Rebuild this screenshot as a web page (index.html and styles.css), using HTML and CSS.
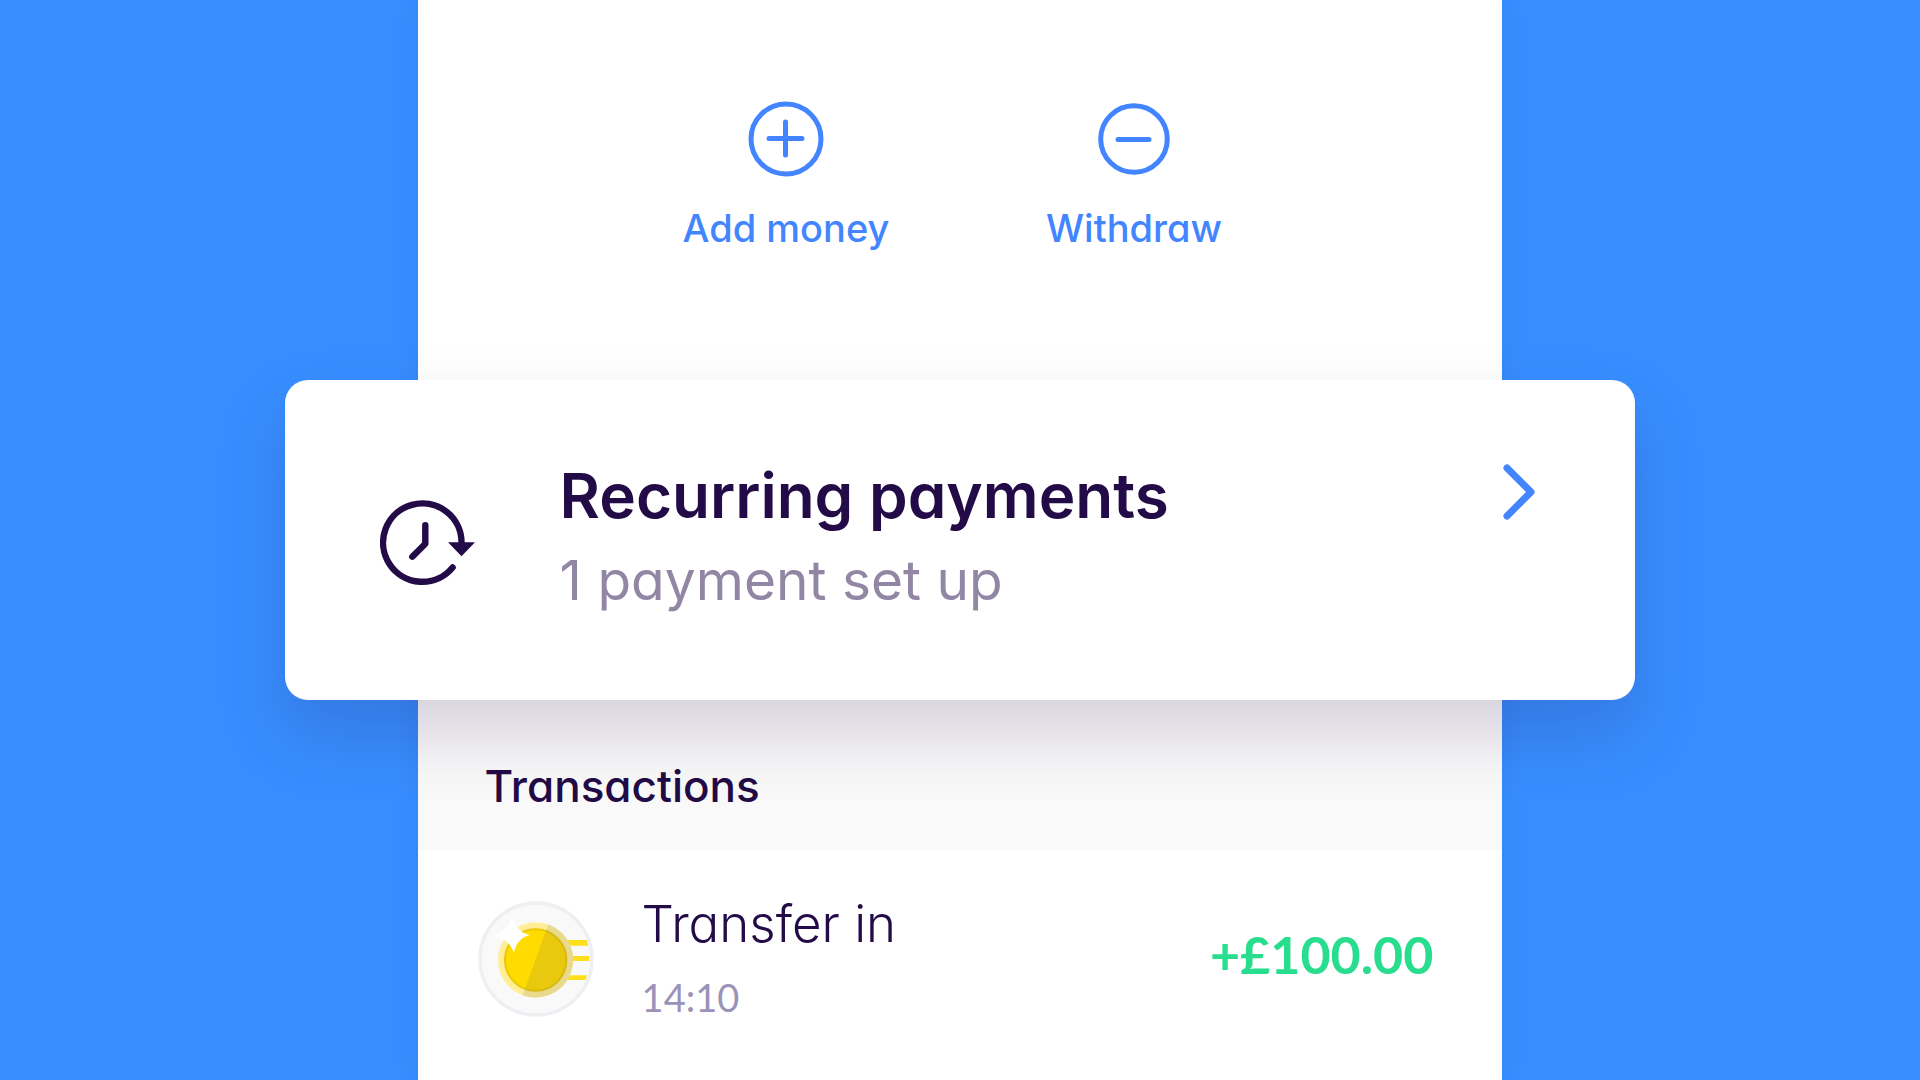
FILE: index.html
```html
<!DOCTYPE html>
<html lang="en">

<head>
    <meta charset="utf-8">
    <title>Recurring payments</title>
    <link rel="stylesheet" href="styles.css">
</head>

<body>
    <main class="panel">
        <section class="actions">
            <button class="action" type="button">
                <svg class="action-icon" viewBox="0 0 76 76" aria-hidden="true">
                    <circle cx="38" cy="38" r="35" />
                    <path d="M21 37.5h33M37.5 21v33" />
                </svg>
                Add money
            </button>
            <button class="action" type="button">
                <svg class="action-icon" viewBox="0 0 76 76" aria-hidden="true">
                    <circle cx="38" cy="38" r="33.3" />
                    <path d="M22 38.5h31" />
                </svg>
                Withdraw
            </button>
        </section>

        <a class="card" href="#recurring">
            <svg class="clock" viewBox="20 29 96 88" aria-hidden="true">
                <path d="M101.5 74A39.2 39.2 0 1 0 92.6 97.5M65.3 55.3v18.4L52.3 86.7" />
                <path class="clock-arrow" d="M88 72.3h27l-13.5 14z" />
            </svg>
            <div class="card-text">
                <h1 class="card-title">Recurring payments</h1>
                <p class="card-sub">1 payment set up</p>
            </div>
            <svg class="chevron" viewBox="0 0 32 56" aria-hidden="true">
                <path d="M4 4l24 24L4 52" />
            </svg>
        </a>

        <section class="transactions">
            <h2 class="section-title">Transactions</h2>
            <div class="row">
                <svg class="coin" viewBox="0 0 348 348" aria-hidden="true">
                    <circle cx="174" cy="174" r="168" fill="#f9f9f9" stroke="#eeeef3" stroke-width="10" />
                    <path d="M255 117h72l4 17h-76zM255 165h79v15h-79zM255 223h72l-4 14h-68z" fill="#ffdf1b" />
                    <circle cx="173" cy="177" r="113" fill="#ffee96" />
                    <circle cx="173" cy="177" r="92" fill="#ffdb00" stroke="#ebc906" stroke-width="6" />
                    <!-- shaded half of the coin -->
                    <path d="M211 70A113 113 0 0 1 134 283z" fill="#625a5d" fill-opacity=".14" />
                    <path d="M103 44Q113 92 156 102Q116 112 108 155Q94 113 46 104Q93 92 103 44z" fill="#fff" />
                </svg>
                <div class="row-text">
                    <h3 class="row-title">Transfer in</h3>
                    <time class="row-time">14:10</time>
                </div>
                <span class="amount">+£100.00</span>
            </div>
        </section>
    </main>
</body>

</html>
```
FILE: styles.css
```css
* {
    box-sizing: border-box;
}

body {
    margin: 0;
    min-height: 100vh;
    display: flex;
    justify-content: center;
    overflow: hidden;
    background: #388eff;
    color: #220b47;
    font-family: Inter, "Open Sans", sans-serif;
    font-feature-settings: "cv11";
}

h1,
h2,
h3,
p {
    margin: 0;
}

.panel {
    width: 56.5%;
    background: #fff;
    box-shadow: 0 0 24px rgba(34, 11, 71, 0.08);
}

.actions {
    display: grid;
    grid-template-columns: 348px 348px;
    justify-content: center;
    align-items: start;
    height: 380px;
    padding-top: 101px;
}

.action {
    display: flex;
    flex-direction: column;
    align-items: center;
    gap: 29px;
    padding: 0;
    border: 0;
    background: none;
    color: #4285ff;
    font: inherit;
    font-size: 38px;
    font-weight: 500;
    line-height: 44px;
    cursor: pointer;
}

.action-icon {
    width: 76px;
    height: 76px;
    fill: none;
    stroke: currentColor;
    stroke-width: 5;
    stroke-linecap: round;
}

/* wider than the panel on both sides */
.card {
    position: relative;
    display: flex;
    align-items: center;
    margin: 0 -133px;
    height: 320px;
    padding: 0 100px 0 95px;
    border-radius: 23px;
    background: #fff;
    box-shadow: 0 34px 68px rgba(34, 11, 71, 0.17);
    color: inherit;
    text-decoration: none;
}

.clock {
    width: 96px;
    height: 88px;
    margin-top: 6px;
    margin-right: 84px;
    fill: none;
    stroke: #220b47;
    stroke-width: 6.4;
    stroke-linecap: round;
    stroke-linejoin: round;
}

.clock-arrow {
    fill: #220b47;
    stroke: none;
}

.card-text {
    flex: 1;
    padding-bottom: 4px;
}

.card-title {
    font-size: 62px;
    font-weight: 600;
    line-height: 84px;
}

.card-sub {
    color: #9187a5;
    font-size: 55px;
    line-height: 84px;
}

.chevron {
    width: 32px;
    height: 56px;
    align-self: flex-start;
    margin-top: 84px;
    fill: none;
    stroke: #4285ff;
    stroke-width: 7;
    stroke-linecap: round;
    stroke-linejoin: round;
}

.section-title {
    padding: 60px 67px 38px;
    background: #f9f9f9;
    font-size: 44px;
    font-weight: 500;
    line-height: 52px;
}

.row {
    display: flex;
    align-items: center;
    padding: 36px 69px 36px 60px;
}

.coin {
    width: 116px;
    height: 116px;
    margin-right: 48px;
}

.row-text {
    flex: 1;
}

.row-title {
    font-size: 51px;
    font-weight: 300;
    line-height: 76px;
}

.row-time {
    display: block;
    color: #9a92b8;
    font-family: Lato, sans-serif;
    font-size: 38px;
    line-height: 70px;
}

.amount {
    padding-bottom: 10px;
    color: #28dd8d;
    font-family: Lato, sans-serif;
    font-size: 52px;
    font-weight: 700;
    line-height: 60px;
}
```
